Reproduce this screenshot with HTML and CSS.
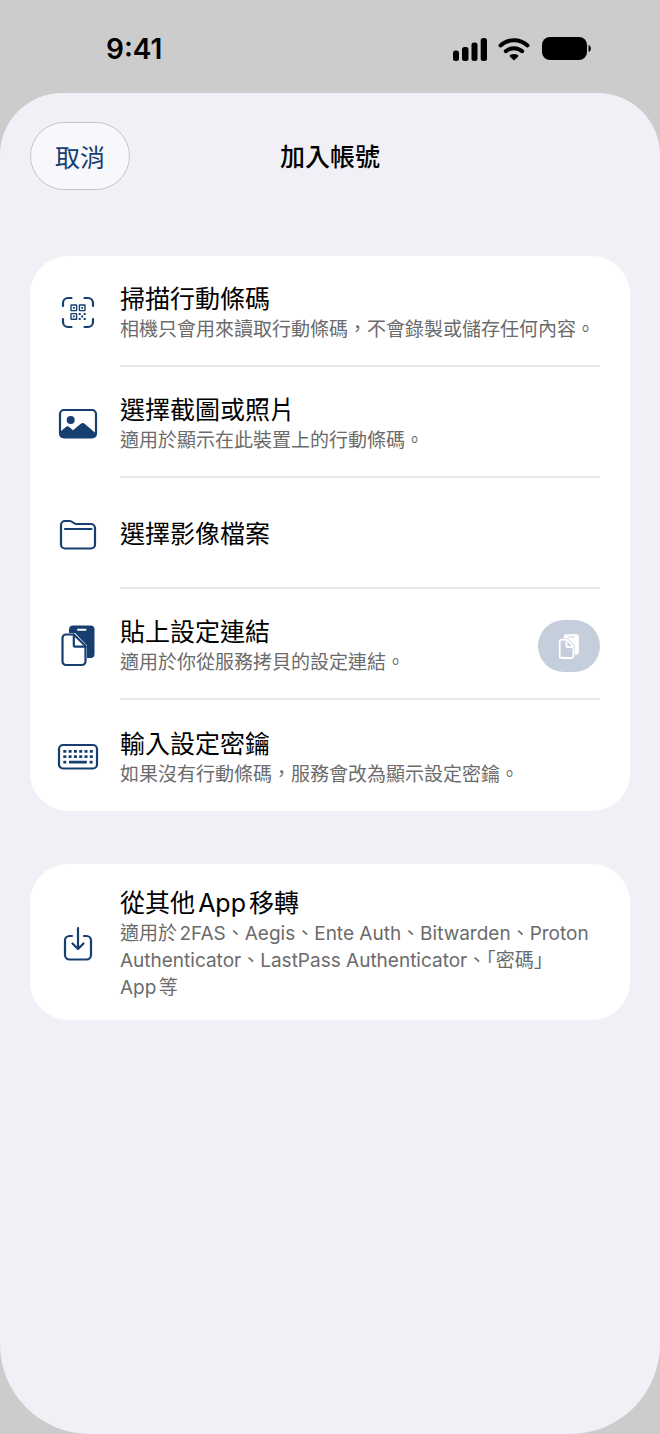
FILE: index.html
```html
<!DOCTYPE html>
<html lang="zh-Hant">
<head>
    <meta charset="UTF-8">
    <meta name="viewport" content="width=device-width, initial-scale=1.0">
    <title>加入帳號</title>
    <link rel="stylesheet" href="styles.css">
</head>
<body>
    <div class="status-bar">
        <span class="time">9:41</span>
        <svg class="status-icons" width="140" height="24" viewBox="0 0 140 24" aria-hidden="true">
            <!-- signal -->
            <rect x="1" y="13.500" width="6" height="10.500" rx="2.500"/>
            <rect x="10" y="10" width="6.500" height="14" rx="2.500"/>
            <rect x="19.500" y="5.500" width="6" height="18.500" rx="2.500"/>
            <rect x="28.700" y="1" width="6.300" height="23" rx="2.500"/>
            <!-- wifi -->
            <path class="wave" d="M48.500 8.500a20 20 0 0 1 27 0M53.800 14.200a12.500 12.500 0 0 1 16.400 0"/>
            <path d="M62 23.500l-3.800-3.600c-.8-.8-.7-1.600.2-2.100 2.300-1.200 4.900-1.200 7.200 0 .9.500 1 1.300.2 2.100z"/>
            <!-- battery -->
            <rect x="90" y="0" width="45" height="23" rx="8"/>
            <path d="M136.500 8c3.200 1 3.200 6 0 7z"/>
        </svg>
    </div>

    <main class="sheet">
        <header class="sheet-header">
            <button class="cancel" type="button">取消</button>
            <h1>加入帳號</h1>
        </header>

        <ul class="card">
            <li class="row">
                <svg class="icon" viewBox="0 0 40 40" aria-hidden="true">
                    <path class="line" d="M5 14V11a5 5 0 0 1 5-5h3.500M26.500 6H30a5 5 0 0 1 5 5v3M35 27v3a5 5 0 0 1-5 5h-3.500M13.500 35H10a5 5 0 0 1-5-5v-3"/>
                    <g class="thin">
                        <rect x="13" y="13" width="5.600" height="5.600" rx=".3"/>
                        <rect x="21.400" y="13" width="5.600" height="5.600" rx=".3"/>
                        <rect x="13" y="21.600" width="5.600" height="5.600" rx=".3"/>
                    </g>
                    <path d="M14.900 14.900h1.800v1.800h-1.800zM23.300 14.900h1.800v1.800h-1.800zM14.900 23.500h1.800v1.800h-1.800zM20.700 21h2v2h-2zM25.700 21h2v2h-2zM23.200 23.500h2v2h-2zM20.700 26h2v2h-2zM25.700 26h2v2h-2z"/>
                </svg>
                <div class="row-body">
                    <div class="text">
                        <h2>掃描行動條碼</h2>
                        <p>相機只會用來讀取行動條碼，不會錄製或儲存任何內容。</p>
                    </div>
                </div>
            </li>
            <li class="row">
                <svg class="icon" viewBox="0 0 40 40" aria-hidden="true">
                    <rect class="line" x="2" y="7" width="36" height="27.500" rx="4"/>
                    <circle cx="12.700" cy="17" r="4"/>
                    <path d="M2 29l5.500-4.800q2-1.700 4 0l3.500 3 7.500-6.300q2.200-1.800 4.400 0L38 30.500v1.500a3 3 0 0 1-3.500 3h-29A3 3 0 0 1 2 32z"/>
                </svg>
                <div class="row-body">
                    <div class="text">
                        <h2>選擇截圖或照片</h2>
                        <p>適用於顯示在此裝置上的行動條碼。</p>
                    </div>
                </div>
            </li>
            <li class="row">
                <svg class="icon" viewBox="0 0 40 40" aria-hidden="true">
                    <path class="line" d="M3 11a4 4 0 0 1 4-4h4.500c3.500 0 3.500 3 7 3H33a4 4 0 0 1 4 4v16.500a4 4 0 0 1-4 4H7a4 4 0 0 1-4-4z"/>
                    <path class="line" d="M7 15h26.500"/>
                </svg>
                <div class="row-body">
                    <div class="text">
                        <h2>選擇影像檔案</h2>
                    </div>
                </div>
            </li>
            <li class="row">
                <svg class="icon" viewBox="0 0 40 40" aria-hidden="true">
                    <rect x="11" y=".5" width="25.500" height="32.500" rx="4"/>
                    <path class="slot" d="M20 4.700h7.500"/>
                    <path class="gap" d="M15.500 9.500H8a3.500 3.500 0 0 0-3.500 3.500v23.500A3.500 3.500 0 0 0 8 40h16a3.500 3.500 0 0 0 3.500-3.500V21L16.500 9.500z"/>
                    <path class="line" d="M15.800 9.500H8a3.500 3.500 0 0 0-3.500 3.500v23.500A3.500 3.500 0 0 0 8 40h16a3.500 3.500 0 0 0 3.500-3.500V21z"/>
                    <path class="line" d="M15.800 9.500v11a1.200 1.200 0 0 0 1.200 1.200h10.500"/>
                </svg>
                <div class="row-body">
                    <div class="text">
                        <h2>貼上設定連結</h2>
                        <p>適用於你從服務拷貝的設定連結。</p>
                    </div>
                    <button class="paste" type="button" aria-label="貼上">
                        <svg width="24" height="24" viewBox="0 0 40 40" aria-hidden="true">
                            <rect x="11" y=".5" width="25.500" height="34" rx="4"/>
                            <path class="slot" d="M19 5h9"/>
                            <path class="gap" d="M15.500 9.500H8a3.500 3.500 0 0 0-3.500 3.500v23.500A3.500 3.500 0 0 0 8 40h16a3.500 3.500 0 0 0 3.500-3.500V21L16.500 9.500z"/>
                            <path class="line" d="M15.800 9.500H8a3.500 3.500 0 0 0-3.500 3.500v23.500A3.500 3.500 0 0 0 8 40h16a3.500 3.500 0 0 0 3.500-3.500V21z"/>
                            <path class="line" d="M15.800 9.500v11a1.200 1.200 0 0 0 1.200 1.200h10.500"/>
                        </svg>
                    </button>
                </div>
            </li>
            <li class="row">
                <svg class="icon" viewBox="0 0 40 40" aria-hidden="true">
                    <rect class="line" x="1" y="9" width="38" height="23.500" rx="4"/>
                    <path class="keys" d="M5.300 15.300h29.500M5.300 20.700h29.500"/>
                    <path d="M5.300 24.800h3v2.600h-3zM11 24.800h17.800v2.600H11zM31.600 24.800h3v2.600h-3z"/>
                </svg>
                <div class="row-body">
                    <div class="text">
                        <h2>輸入設定密鑰</h2>
                        <p>如果沒有行動條碼，服務會改為顯示設定密鑰。</p>
                    </div>
                </div>
            </li>
        </ul>

        <ul class="card">
            <li class="row">
                <svg class="icon" viewBox="0 0 40 40" aria-hidden="true">
                    <path class="line" d="M14 14h-2.500A4.500 4.500 0 0 0 7 18.500v14.500a4.500 4.500 0 0 0 4.500 4.500h17a4.500 4.500 0 0 0 4.500-4.500V18.500a4.500 4.500 0 0 0-4.500-4.500H26"/>
                    <path class="line" d="M20 6v21M14.500 21.500l5.500 5.500 5.500-5.500"/>
                </svg>
                <div class="row-body">
                    <div class="text">
                        <h2>從其他App移轉</h2>
                        <p>適用於2FAS、Aegis、Ente Auth、Bitwarden、Proton Authenticator、LastPass Authenticator、「密碼」<span class="keep">App等</span></p>
                    </div>
                </div>
            </li>
        </ul>
    </main>
</body>
</html>
```

FILE: styles.css
```css
* {
    box-sizing: border-box;
}
body {
    margin: 0;
    min-height: 100vh;
    display: flex;
    flex-direction: column;
    background: #cccccc;
    color: #000;
    font-family: Inter, "Noto Sans CJK TC", sans-serif;
    text-autospace: normal;
}
h1, h2, p, ul {
    margin: 0;
    padding: 0;
}
ul {
    list-style: none;
}
button {
    border: none;
    font-family: inherit;
    cursor: pointer;
}

/* status bar */
.status-bar {
    height: 93px;
    padding: 4px 68px 0 106px;
    display: flex;
    align-items: center;
    justify-content: space-between;
}
.time {
    font-size: 28px;
    font-weight: 600;
}
.status-icons .wave {
    fill: none;
    stroke: #000;
    stroke-width: 4;
    stroke-linecap: round;
}

/* sheet */
.sheet {
    flex: 1;
    padding: 29px 30px;
    background: #f1f0f6;
    border-radius: 62px 62px 90px 90px;
}
.sheet-header {
    display: grid;
    grid-template-columns: 1fr auto 1fr;
    align-items: center;
    margin-bottom: 66px;
}
.sheet-header h1 {
    padding-top: 2px;
    font-size: 25px;
    line-height: 33px;
    font-weight: 500;
}
.cancel {
    width: 100px;
    height: 68px;
    border: 1px solid #c3c3c9;
    border-radius: 34px;
    background: #f8f8fc;
    color: #163f70;
    font-size: 25px;
}

/* cards */
.card {
    background: #fff;
    border-radius: 38px;
    margin-bottom: 53px;
}
.row {
    display: flex;
    align-items: center;
    padding: 0 30px 0 28px;
    gap: 22px;
}
.row-body {
    flex: 1;
    min-width: 0;
    min-height: 111px;
    padding: 23px 0 19px;
    display: flex;
    align-items: center;
    justify-content: space-between;
    border-bottom: 2px solid #e8e8e8;
}
.row:last-child .row-body {
    border-bottom: none;
}
.text h2 {
    font-size: 25px;
    line-height: 33px;
    font-weight: 400;
}
.text p {
    font-size: 19px;
    line-height: 27px;
    color: #6b6b6b;
}
.keep {
    white-space: nowrap;
}

/* icons */
.icon {
    flex: none;
    width: 40px;
    height: 40px;
    overflow: visible;
    fill: #163f70;
    stroke: none;
}
.icon .line {
    fill: none;
    stroke: #163f70;
    stroke-width: 2.2;
    stroke-linecap: round;
    stroke-linejoin: round;
}
.icon .thin {
    fill: none;
    stroke: #163f70;
    stroke-width: 1.4;
}
.icon .keys {
    fill: none;
    stroke: #163f70;
    stroke-width: 2.8;
    stroke-dasharray: 3 2.3;
}
.icon .slot {
    stroke: #fff;
    stroke-width: 2;
    stroke-linecap: round;
}
.icon .gap {
    fill: #fff;
    stroke: #fff;
    stroke-width: 3;
}
.paste {
    flex: none;
    width: 62px;
    height: 52px;
    border-radius: 26px;
    padding: 0;
    display: flex;
    align-items: center;
    justify-content: center;
    background: #c5cfdc;
}
.paste svg {
    overflow: visible;
    fill: #fff;
}
.paste .line {
    fill: none;
    stroke: #fff;
    stroke-width: 3;
    stroke-linejoin: round;
}
.paste .slot {
    stroke: #c5cfdc;
    stroke-width: 2;
    stroke-linecap: round;
}
.paste .gap {
    fill: #c5cfdc;
    stroke: #c5cfdc;
    stroke-width: 5;
}
```
